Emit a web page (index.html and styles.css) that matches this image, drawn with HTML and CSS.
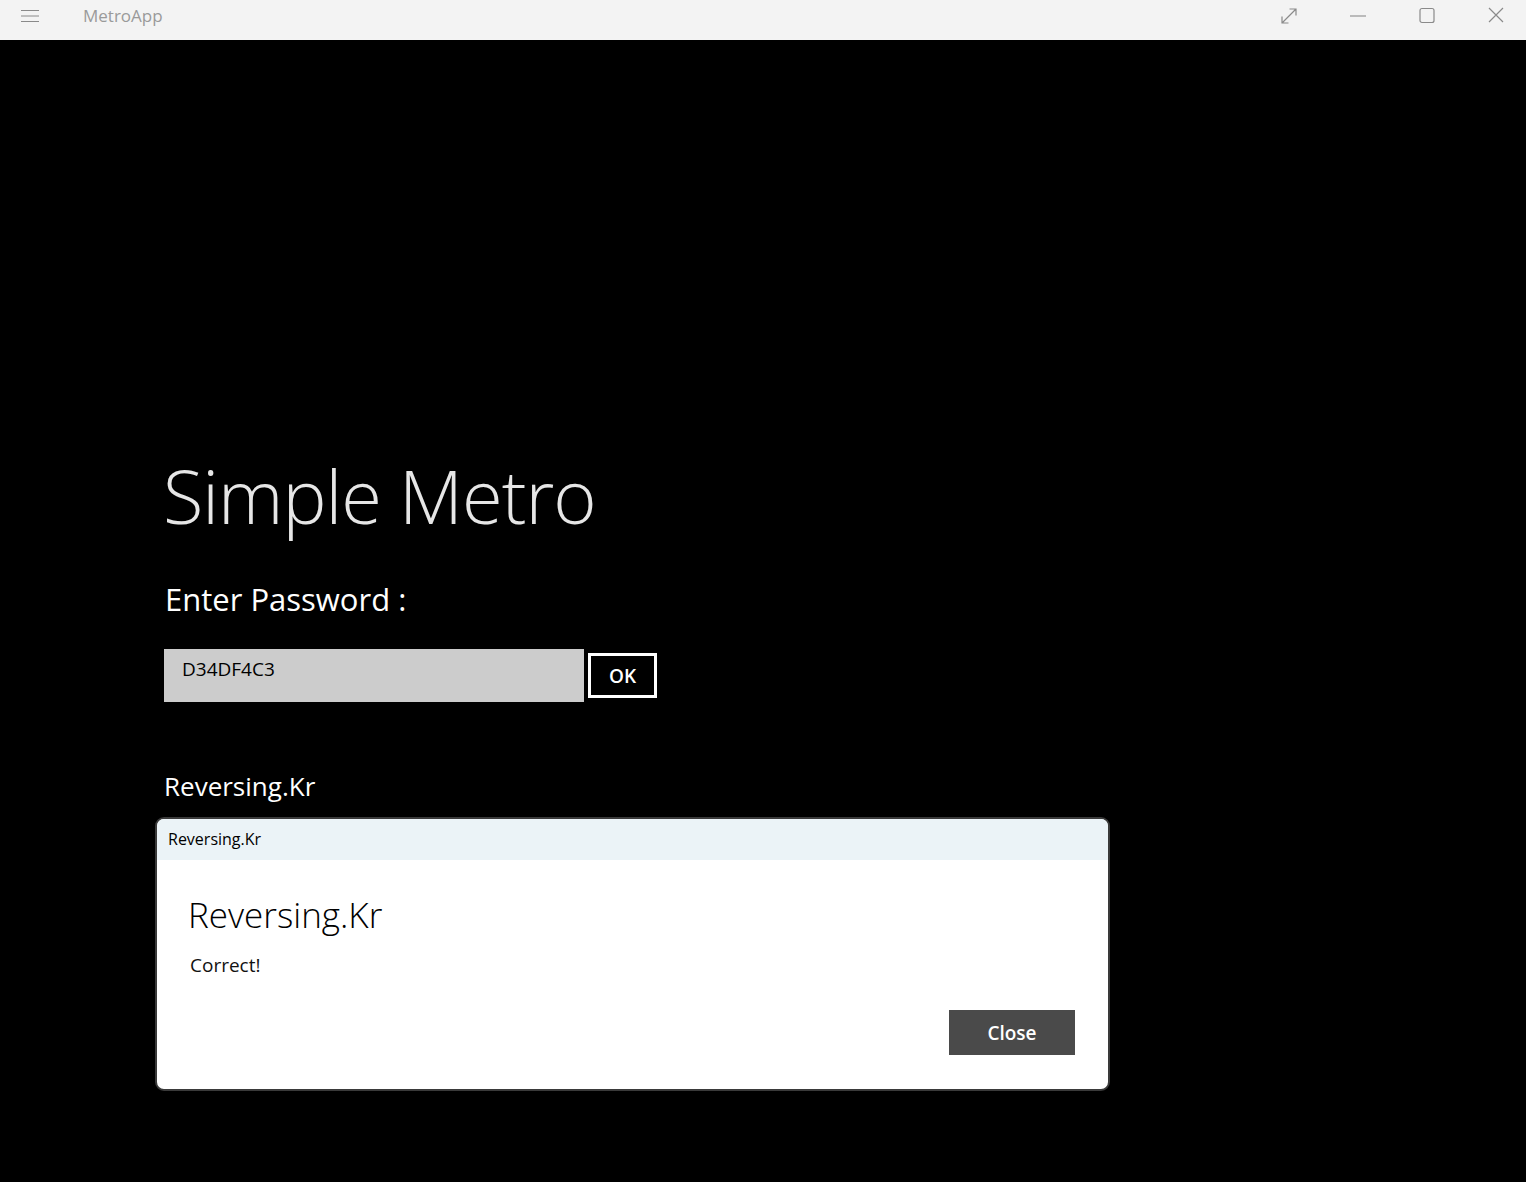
FILE: index.html
```html
<!DOCTYPE html>
<html>
<head>
<meta charset="utf-8">
<link rel="stylesheet" href="styles.css">
</head>
<body>
<div class="titlebar">
  <div class="tb-left">
    <svg class="hamburger" width="18" height="14" viewBox="0 0 18 14"><path d="M0 1.5H18M0 7H18M0 12.5H18" stroke="#8a8a8a" stroke-width="1"/></svg>
    <span class="app-name">MetroApp</span>
  </div>
  <div class="tb-right">
    <div class="tb-btn"><svg width="18" height="18" viewBox="0 0 18 18"><path d="M2 16L16 2M9.5 2H16V8.5M2 9.5V16H8.5" fill="none" stroke="#8a8a8a" stroke-width="1.2"/></svg></div>
    <div class="tb-btn"><svg width="18" height="18" viewBox="0 0 18 18"><path d="M1 9H17" stroke="#8a8a8a" stroke-width="1.1"/></svg></div>
    <div class="tb-btn"><svg width="18" height="18" viewBox="0 0 18 18"><rect x="2" y="1.5" width="14" height="14" rx="2" fill="none" stroke="#8a8a8a" stroke-width="1.2"/></svg></div>
    <div class="tb-btn"><svg width="18" height="18" viewBox="0 0 18 18"><path d="M2 1L16 15M16 1L2 15" stroke="#8a8a8a" stroke-width="1.2"/></svg></div>
  </div>
</div>
<div class="content">
  <h1 class="title">Simple Metro</h1>
  <div class="label">Enter Password :</div>
  <div class="form-row">
    <div class="input">D34DF4C3</div>
    <div class="ok-btn">OK</div>
  </div>
  <div class="result">Reversing.Kr</div>
  <div class="dialog">
    <div class="dlg-header">Reversing.Kr</div>
    <div class="dlg-body">
      <div class="dlg-title">Reversing.Kr</div>
      <div class="dlg-msg">Correct!</div>
      <div class="dlg-actions"><div class="close-btn">Close</div></div>
    </div>
  </div>
</div>
</body>
</html>
```
FILE: styles.css
```css
html, body {
  margin: 0;
  padding: 0;
  background: #000;
  font-family: "Open Sans", "Noto Sans", sans-serif;
}
.titlebar {
  height: 40px;
  background: #f3f3f3;
  display: flex;
  justify-content: space-between;
  align-items: center;
}
.tb-left {
  display: flex;
  align-items: center;
  padding-left: 21px;
}
.hamburger { display: block; margin-top: -8px; }
.app-name {
  margin-left: 44px;
  font-size: 17px;
  color: #9a9a9a;
  margin-top: -9px;
}
.tb-right {
  display: flex;
  gap: 9px;
  padding-right: 0;
}
.tb-btn {
  width: 60px;
  display: flex;
  justify-content: center;
  margin-top: -9px;
}
.content {
  padding-left: 163px;
  padding-top: 406px;
  color: #fff;
}
.title {
  margin: 0;
  font-weight: 300;
  font-size: 74px;
  line-height: 100px;
  color: #e6e6e6;
  letter-spacing: -1px;
}
.label {
  margin-top: 33px;
  margin-left: 2px;
  font-size: 31px;
  line-height: 40px;
}
.form-row {
  display: flex;
  align-items: center;
  margin-top: 30px;
  margin-left: 1px;
}
.input {
  width: 402px;
  height: 53px;
  background: #cccccc;
  color: #000;
  font-size: 19px;
  padding-left: 18px;
  line-height: 40px;
}
.ok-btn {
  margin-left: 4px;
  width: 63px;
  height: 39px;
  border: 3px solid #fff;
  display: flex;
  align-items: center;
  justify-content: center;
  font-size: 19px;
  font-weight: 600;
}
.result {
  margin-top: 66px;
  margin-left: 1px;
  font-size: 26px;
  line-height: 36px;
}
.dialog {
  margin-top: 13px;
  margin-left: -8px;
  width: 951px;
  height: 270px;
  border: 2px solid #3a3a3a;
  border-radius: 9px;
  overflow: hidden;
  background: #fff;
  color: #000;
  display: flex;
  flex-direction: column;
}
.dlg-header {
  height: 41px;
  background: #ebf3f7;
  font-size: 16px;
  line-height: 41px;
  padding-left: 11px;
}
.dlg-body {
  flex: 1;
  padding: 33px 33px 0 31px;
  display: flex;
  flex-direction: column;
}
.dlg-title {
  font-size: 35px;
  font-weight: 300;
  line-height: 44px;
}
.dlg-msg {
  font-size: 19px;
  font-weight: 400;
  line-height: 26px;
  margin-top: 15px;
  margin-left: 2px;
  color: #111;
}
.dlg-actions {
  display: flex;
  justify-content: flex-end;
  margin-top: 32px;
}
.close-btn {
  width: 126px;
  height: 45px;
  background: #4a4a4a;
  color: #fff;
  font-size: 19px;
  font-weight: 600;
  display: flex;
  align-items: center;
  justify-content: center;
}
```
